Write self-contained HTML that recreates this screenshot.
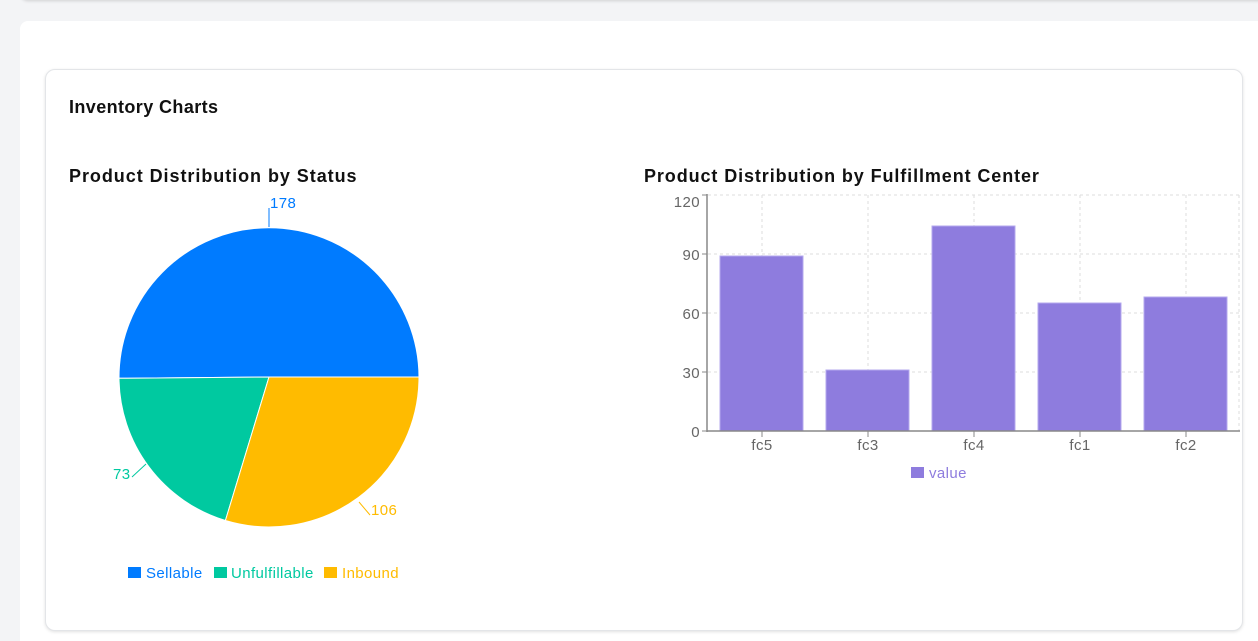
<!DOCTYPE html>
<html><head><meta charset="utf-8"><style>
html,body{margin:0;padding:0;width:1258px;height:641px;overflow:hidden;background:#f3f4f6;font-family:"Liberation Sans",Arial,sans-serif}
.top{position:absolute;left:20px;top:-20px;width:1300px;height:20px;background:#fff;border-radius:8px;box-shadow:0 1px 3px rgba(0,0,0,.15)}
.outer{position:absolute;left:20px;top:21px;width:1238px;height:620px;background:#fff;border-radius:8px 0 0 0}
.inner{position:absolute;left:45px;top:69px;width:1196px;height:560px;background:#fff;border:1px solid #e3e5e8;border-radius:10px;box-shadow:0 1px 3px rgba(0,0,0,.12)}
h1{position:absolute;left:69px;top:97px;margin:0;font-size:18px;font-weight:bold;color:#111;letter-spacing:0.4px}
h2{position:absolute;margin:0;font-size:18px;font-weight:bold;color:#111;top:166px;letter-spacing:0.95px}
svg{position:absolute;left:0;top:0}
svg text{letter-spacing:0.4px}
</style></head><body>
<div class="top"></div>
<div class="outer"></div>
<div class="inner"></div>
<h1>Inventory Charts</h1>
<h2 style="left:69px">Product Distribution by Status</h2>
<h2 style="left:644px;letter-spacing:0.9px">Product Distribution by Fulfillment Center</h2>
<svg width="1258" height="641" font-family="Liberation Sans, Arial, sans-serif">
<path d="M269,377 L419,377 A150,150 0 0 0 119,378.3 Z" fill="#007bff" stroke="#fff" stroke-width="1"/>
<path d="M269,377 L119,378.3 A150,150 0 0 0 225.4,520.5 Z" fill="#00c9a0" stroke="#fff" stroke-width="1"/>
<path d="M269,377 L225.4,520.5 A150,150 0 0 0 419,377 Z" fill="#ffbb00" stroke="#fff" stroke-width="1"/>
<line x1="269" y1="227" x2="269" y2="208" stroke="#007bff"/>
<text x="270" y="208" font-size="15" fill="#007bff">178</text>
<line x1="146" y1="464" x2="132" y2="477" stroke="#00c9a0"/>
<text x="113" y="479" font-size="15" fill="#00c9a0">73</text>
<line x1="359" y1="502" x2="370" y2="515" stroke="#ffbb00"/>
<text x="371" y="515" font-size="15" fill="#ffbb00">106</text>
<rect x="128" y="567" width="13" height="11" fill="#007bff"/><text x="146" y="578" font-size="15" fill="#007bff">Sellable</text>
<rect x="214" y="567" width="13" height="11" fill="#00c9a0"/><text x="231" y="578" font-size="15" fill="#00c9a0">Unfulfillable</text>
<rect x="324" y="567" width="13" height="11" fill="#ffbb00"/><text x="342" y="578" font-size="15" fill="#ffbb00">Inbound</text>
<g stroke="#ddd" stroke-dasharray="3,3">
<line x1="708" y1="195" x2="1239" y2="195"/><line x1="708" y1="254" x2="1239" y2="254"/><line x1="708" y1="313" x2="1239" y2="313"/><line x1="708" y1="372" x2="1239" y2="372"/>
<line x1="762" y1="195" x2="762" y2="431"/><line x1="868" y1="195" x2="868" y2="431"/><line x1="974" y1="195" x2="974" y2="431"/><line x1="1080" y1="195" x2="1080" y2="431"/><line x1="1186" y1="195" x2="1186" y2="431"/><line x1="1239" y1="195" x2="1239" y2="431"/>
</g>
<g fill="#8e7cde" stroke="#b4a9ee" stroke-width="1">
<rect x="720" y="256" width="83" height="175"/><rect x="826" y="370" width="83" height="61"/><rect x="932" y="226" width="83" height="205"/><rect x="1038" y="303" width="83" height="128"/><rect x="1144" y="297" width="83" height="134"/>
</g>
<line x1="707" y1="194" x2="707" y2="432" stroke="#888" stroke-width="1.5"/>
<line x1="707" y1="431" x2="1240" y2="431" stroke="#888" stroke-width="1.5"/>
<g stroke="#888"><line x1="702" y1="195" x2="707" y2="195"/><line x1="702" y1="254" x2="707" y2="254"/><line x1="702" y1="313" x2="707" y2="313"/><line x1="702" y1="372" x2="707" y2="372"/><line x1="702" y1="431" x2="707" y2="431"/>
<line x1="762" y1="431" x2="762" y2="437"/><line x1="868" y1="431" x2="868" y2="437"/><line x1="974" y1="431" x2="974" y2="437"/><line x1="1080" y1="431" x2="1080" y2="437"/><line x1="1186" y1="431" x2="1186" y2="437"/></g>
<g font-size="15" fill="#666" text-anchor="end">
<text x="700" y="207">120</text><text x="700" y="260">90</text><text x="700" y="319">60</text><text x="700" y="378">30</text><text x="700" y="437">0</text></g>
<g font-size="15" fill="#666" text-anchor="middle">
<text x="762" y="450">fc5</text><text x="868" y="450">fc3</text><text x="974" y="450">fc4</text><text x="1080" y="450">fc1</text><text x="1186" y="450">fc2</text></g>
<rect x="911" y="467" width="13" height="11" fill="#8e7cde"/><text x="929" y="478" font-size="15" fill="#8e7cde">value</text>
</svg>
</body></html>
